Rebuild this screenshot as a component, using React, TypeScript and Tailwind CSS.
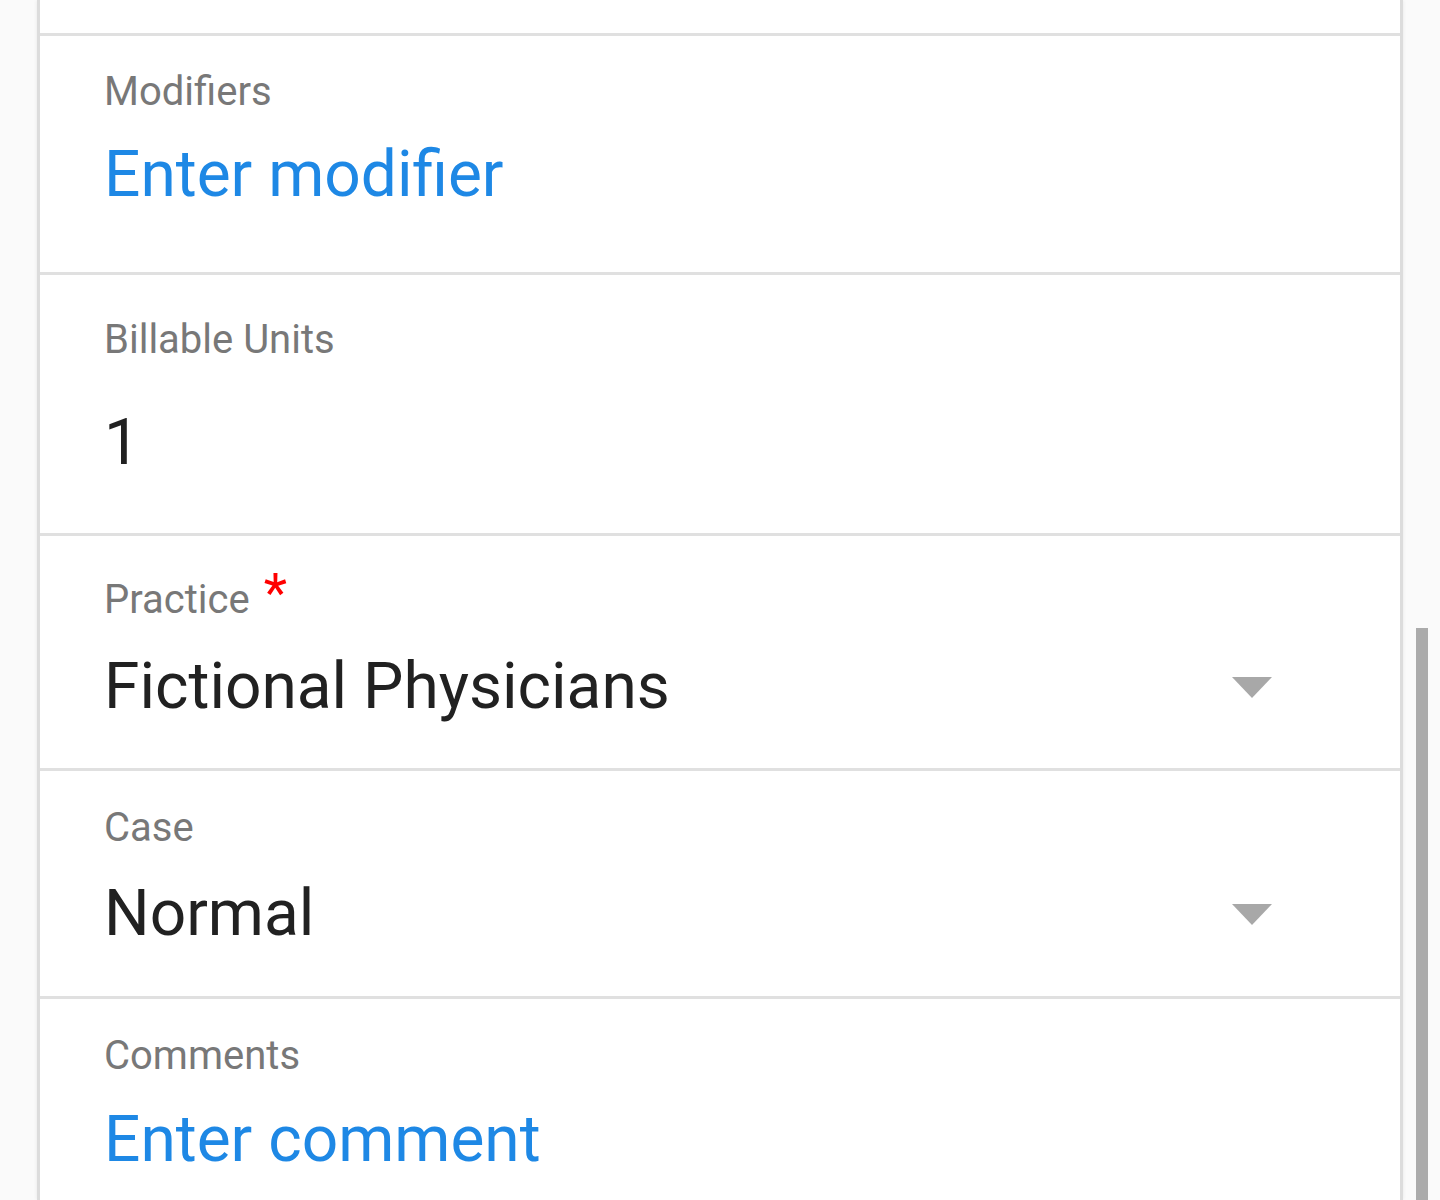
import type { ReactNode } from 'react';

const font = { fontFamily: 'Roboto, "Noto Sans", sans-serif' };

function Chevron() {
  return (
    <svg width="40" height="21" viewBox="0 0 40 21" className="shrink-0">
      <polygon points="0,0 40,0 20,21" fill="#a8a8a8" />
    </svg>
  );
}

function Row({
  label,
  required,
  height,
  padTop,
  gap,
  last,
  children,
}: {
  label: string;
  required?: boolean;
  height: string;
  padTop: string;
  gap: string;
  last?: boolean;
  children: ReactNode;
}) {
  return (
    <div
      className={`${height} ${padTop} pl-[64px] pr-[128px] ${
        last ? '' : 'border-b-[3px] border-[#e0e0e0]'
      }`}
    >
      <div className="flex items-start text-[40px] leading-none text-[#787878]">
        {label}
        {required && (
          <span className="ml-[14px] -mt-[14px] text-[54px] leading-none text-[#ff0000]">*</span>
        )}
      </div>
      <div className={gap}>{children}</div>
    </div>
  );
}

export default function App() {
  return (
    <div className="flex h-[1200px] overflow-hidden bg-[#fafafa]" style={font}>
      {/* Form card */}
      <div className="ml-[37px] w-[1366px] border-x-[3px] border-[#dcdcdc] bg-white shadow-[0_0_4px_rgba(0,0,0,0.08)]">
        <div className="h-[36px] border-b-[3px] border-[#e0e0e0]" />

        <Row label="Modifiers" height="h-[239px]" padTop="pt-[36px]" gap="mt-[31px]">
          <div className="text-[64px] leading-none text-[#1e88e5]">Enter modifier</div>
        </Row>

        <Row label="Billable Units" height="h-[261px]" padTop="pt-[45px]" gap="mt-[51px]">
          <div className="text-[64px] leading-none text-[#212121]">1</div>
        </Row>

        <Row label="Practice" required height="h-[235px]" padTop="pt-[44px]" gap="mt-[35px]">
          <div className="flex items-center justify-between">
            <span className="text-[64px] leading-none text-[#212121]">Fictional Physicians</span>
            <Chevron />
          </div>
        </Row>

        <Row label="Case" height="h-[228px]" padTop="pt-[37px]" gap="mt-[34px]">
          <div className="flex items-center justify-between">
            <span className="text-[64px] leading-none text-[#212121]">Normal</span>
            <Chevron />
          </div>
        </Row>

        <Row label="Comments" height="h-[201px]" padTop="pt-[37px]" gap="mt-[32px]" last>
          <div className="text-[64px] leading-none text-[#1e88e5]">Enter comment</div>
        </Row>
      </div>

      {/* Scrollbar */}
      <div className="ml-[13px] w-[12px]">
        <div className="mt-[628px] h-[572px] w-[12px] bg-[#ababab]" />
      </div>
    </div>
  );
}
